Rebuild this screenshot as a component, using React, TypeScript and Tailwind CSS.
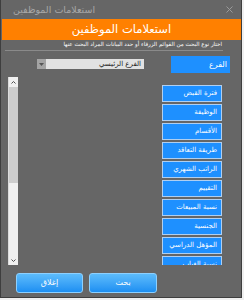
import React from 'react';

const fields = [
  'فترة القبض',
  'الوظيفة',
  'الأقسام',
  'طريقة التعاقد',
  'الراتب الشهري',
  'التقييم',
  'نسبة المبيعات',
  'الجنسية',
  'المؤهل الدراسي',
  'نسبة الغياب',
];

export default function App() {
  return (
    <div className="w-[244px] h-[300px] bg-[#f0f0f0]" style={{ fontFamily: '"DejaVu Sans", "Noto Sans", sans-serif' }}>
      <div className="w-[242px] h-[298px] bg-[#666666] border-l border-r border-b border-[#3e3e3e] flex flex-col">
        {/* title bar */}
        <div className="h-[19px] flex items-center">
          <span className="ml-[12px] text-[9.5px] leading-none text-[#a6a6a6]">استعلامات الموظفين</span>
          <svg className="ml-auto mr-[8px]" width="7" height="7" viewBox="0 0 7 7">
            <path d="M0.5 0.5 L6.5 6.5 M6.5 0.5 L0.5 6.5" stroke="#9a9a9a" strokeWidth="1" />
          </svg>
        </div>

        {/* orange header */}
        <div className="h-[21px] ml-[1px] bg-[#ff8000] flex items-center justify-center">
          <span className="text-[11.5px] leading-none text-white">استعلامات الموظفين</span>
        </div>

        {/* hint */}
        <div className="h-[10px] flex items-center justify-end pr-[19px]">
          <span dir="rtl" className="text-[5.6px] leading-none text-white">
            اختار نوع البحث من القوائم الزرقاء أو حدد البيانات المراد البحث عنها
          </span>
        </div>
        <div className="h-px ml-[4px] w-[218px] bg-[#8a8a8a]" />

        {/* branch row */}
        <div className="mt-[5px] h-[17px] flex items-start">
          <div className="ml-[36px] mt-[3px] w-[107px] h-[10px] flex">
            <div className="w-[9px] h-full bg-[#a4a4a4] flex items-center justify-center">
              <svg width="5" height="3" viewBox="0 0 5 3">
                <path d="M0 0 L5 0 L2.5 3 Z" fill="#555555" />
              </svg>
            </div>
            <div className="flex-1 h-full bg-[#e2e2e2] flex items-center justify-end pr-[3px]">
              <span dir="rtl" className="text-[7px] leading-none text-[#222222]">الفرع الرئيسي</span>
            </div>
          </div>
          <div className="ml-[27px] w-[59px] h-[17px] bg-[#1e90ff] flex items-center justify-end pr-[3px]">
            <span className="text-[8px] leading-none text-white">الفرع</span>
          </div>
        </div>

        {/* list panel */}
        <div className="mt-[4px] h-[188px] flex overflow-hidden">
          <div className="ml-[7px] w-[10px] h-full flex flex-col bg-[#f0f0f0] border-l border-[#dcdcdc]">
            <div className="h-[10px] flex items-center justify-center">
              <svg width="5" height="3" viewBox="0 0 5 3">
                <path d="M0.5 2.5 L2.5 0.5 L4.5 2.5" stroke="#505050" strokeWidth="1" fill="none" />
              </svg>
            </div>
            <div className="h-[96px] bg-[#cdcdcd]" />
            <div className="flex-1" />
            <div className="h-[10px] flex items-center justify-center">
              <svg width="5" height="3" viewBox="0 0 5 3">
                <path d="M0.5 0.5 L2.5 2.5 L4.5 0.5" stroke="#505050" strokeWidth="1" fill="none" />
              </svg>
            </div>
          </div>
          <div className="ml-auto mr-[19px] w-[60px] pt-[8px] flex flex-col gap-[2px] shrink-0">
            {fields.map((f) => (
              <div
                key={f}
                className="h-[17px] shrink-0 border border-[#b0cff0] bg-[#1e90ff] flex items-center justify-end pr-[4px]"
              >
                <span dir="rtl" className="text-[7px] leading-none text-white whitespace-nowrap">{f}</span>
              </div>
            ))}
          </div>
        </div>

        {/* footer buttons */}
        <div className="mt-[8px] flex">
          <button className="ml-[15px] w-[67px] h-[20px] rounded-[3px] border border-[#8cd0ff] bg-gradient-to-b from-[#5cbcfb] to-[#1b8ff2] flex items-center justify-center">
            <span className="text-[8px] leading-none text-white">إغلاق</span>
          </button>
          <button className="ml-[6px] w-[68px] h-[20px] rounded-[3px] border border-[#8cd0ff] bg-gradient-to-b from-[#5cbcfb] to-[#1b8ff2] flex items-center justify-center">
            <span className="text-[8px] leading-none text-white">بحث</span>
          </button>
        </div>
      </div>
    </div>
  );
}
